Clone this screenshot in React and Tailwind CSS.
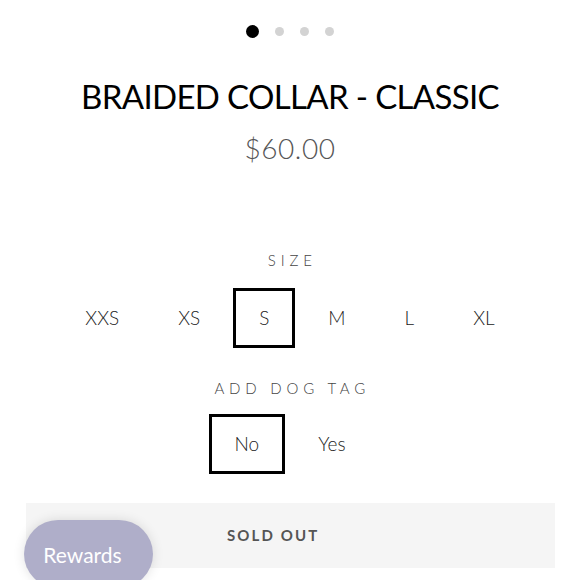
import React from 'react'

const SIZES = ['XXS', 'XS', 'S', 'M', 'L', 'XL']
const TAGS = ['No', 'Yes']

function Option({ label, active }) {
  return (
    <div
      className={`flex h-[60px] items-center justify-center border-[3px] px-[23px] text-[19px] font-light text-[#222] ${
        active ? 'border-black' : 'border-transparent'
      }`}
    >
      {label}
    </div>
  )
}

export default function App() {
  return (
    <div className="relative h-[580px] w-[580px] overflow-hidden bg-white font-['Lato',sans-serif]">
      <div className="flex flex-col items-center">
        {/* carousel dots */}
        <div className="mt-[25px] flex items-center gap-[16px]">
          <span className="h-[13px] w-[13px] rounded-full bg-black" />
          <span className="h-[9px] w-[9px] rounded-full bg-[#d3d3d3]" />
          <span className="h-[9px] w-[9px] rounded-full bg-[#d3d3d3]" />
          <span className="h-[9px] w-[9px] rounded-full bg-[#d3d3d3]" />
        </div>

        <h1 className="mt-[37px] text-[33px] leading-[42px] tracking-[-0.02em] text-black">BRAIDED COLLAR - CLASSIC</h1>
        <div className="mt-[13px] text-[28px] font-light leading-[36px] tracking-[0.02em] text-[#555]">$60.00</div>

        <div className="mt-[84px] pl-[0.3em] text-[15px] font-light leading-[20px] tracking-[0.32em] text-[#444]">SIZE</div>
        <div className="mt-[18px] flex gap-[7px]">
          {SIZES.map((s) => (
            <Option key={s} label={s} active={s === 'S'} />
          ))}
        </div>

        <div className="mt-[30px] pl-[0.3em] text-[15px] font-light leading-[20px] tracking-[0.32em] text-[#444]">ADD DOG TAG</div>
        <div className="mt-[16px] flex gap-[7px]">
          {TAGS.map((t) => (
            <Option key={t} label={t} active={t === 'No'} />
          ))}
        </div>

        <div className="mt-[29px] flex h-[65px] w-[529px] items-center justify-center bg-[#f5f5f5] pr-[36px]">
          <span className="pl-[0.15em] text-[15px] font-bold tracking-[0.14em] text-[#555]">SOLD OUT</span>
        </div>
      </div>

      {/* rewards launcher */}
      <div className="absolute left-[24px] top-[520px] flex h-[68px] w-[129px] items-start justify-center rounded-full bg-[#afaec9] pr-[12px] pt-[19px] text-[21px] text-white shadow-[0_0_12px_rgba(0,0,0,0.12)]">
        Rewards
      </div>
    </div>
  )
}
